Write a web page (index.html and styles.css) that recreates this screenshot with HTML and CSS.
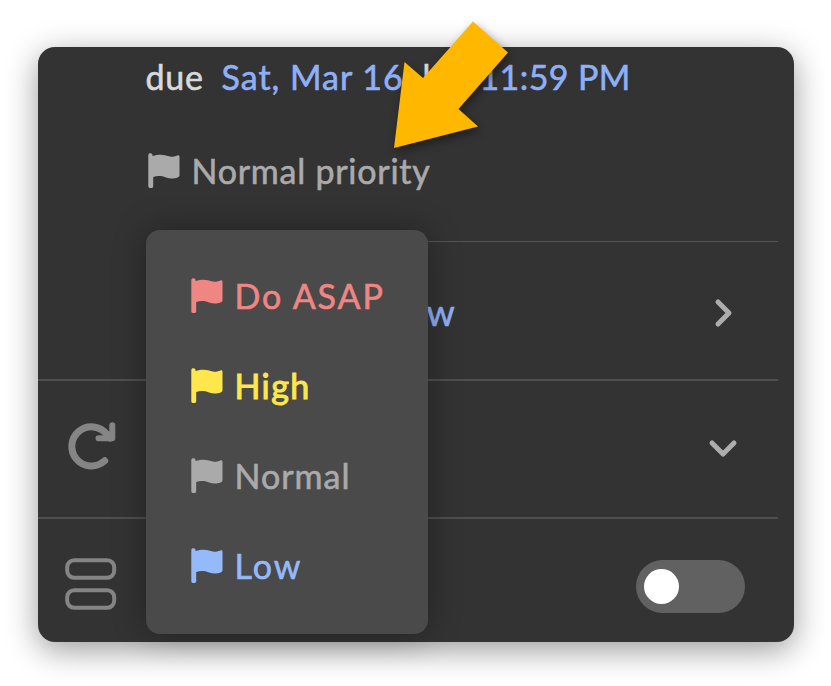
FILE: index.html
```html
<!DOCTYPE html>
<html lang="en">
<head>
  <meta charset="UTF-8">
  <meta name="viewport" content="width=device-width, initial-scale=1.0">
  <title>Task priority</title>
  <link rel="stylesheet" href="styles.css">
</head>
<body>
  <!-- Shared flag icon -->
  <svg class="sprite" width="0" height="0">
    <symbol id="flag" viewBox="0 0 32 36">
      <path d="M0.3 2.2C0.3 0.9 1.2 0.3 2.4 0.3C3.6 0.3 4.5 0.9 4.6 2.9C10 1.4 14 1.2 18 2.6C22 4 25 4 29.5 2.4C30.8 2 31.5 2.6 31.5 3.8V21.7C31.5 23.2 31 23.9 29.7 24.4C25 26 22 25.8 18 24.4C13 22.7 9.5 22.7 5.2 24V32.9C5.2 34.4 4.3 35.1 2.8 35.1C1.2 35.1 0.3 34.4 0.3 32.9Z"/>
    </symbol>
  </svg>

  <div class="card">
    <div class="row row-due">
      <div class="row-body">
        <div class="due-line">
          <span class="due">due</span>
          <span class="date">Sat, Mar 16</span>
          <span class="by">by</span>
          <span class="time">11:59 PM</span>
        </div>
        <div class="priority">
          <svg class="flag"><use href="#flag"/></svg>
          <span class="priority-text">Normal priority</span>
        </div>

        <div class="menu">
          <div class="menu-item asap">
            <svg class="flag"><use href="#flag"/></svg>
            <span>Do ASAP</span>
          </div>
          <div class="menu-item high">
            <svg class="flag"><use href="#flag"/></svg>
            <span>High</span>
          </div>
          <div class="menu-item normal">
            <svg class="flag"><use href="#flag"/></svg>
            <span>Normal</span>
          </div>
          <div class="menu-item low">
            <svg class="flag"><use href="#flag"/></svg>
            <span>Low</span>
          </div>
        </div>
      </div>
    </div>

    <div class="row row-when">
      <span class="when">w</span>
      <svg class="chevron" viewBox="0 0 30 30">
        <path d="M10 4L21 15L10 26"/>
      </svg>
    </div>

    <div class="row row-repeat">
      <svg class="icon" viewBox="0 0 54 54">
        <path class="repeat-arc" d="M40.7 40.8A19.6 19.6 0 1 1 43 14.5L46 18"/>
        <path class="repeat-head" d="M48.3 5.3V18.3H34.5M41 12L47.5 17.5"/>
      </svg>
      <svg class="chevron" viewBox="0 0 30 30">
        <path d="M4 9L15 20L26 9"/>
      </svg>
    </div>

    <div class="row row-list">
      <svg class="icon" viewBox="0 0 54 54">
        <rect x="3.2" y="3.2" width="47" height="17.6" rx="7"/>
        <rect x="3.2" y="33.2" width="47" height="17.6" rx="7"/>
      </svg>
      <div class="toggle"><div class="knob"></div></div>
    </div>
  </div>

  <svg class="arrow" viewBox="0 0 115 128">
    <polygon points="0,127 10.5,41 29,57 79,0.5 114,31.5 64.5,88 84,105.5"/>
  </svg>
</body>
</html>
```

FILE: styles.css
```css
* {
  box-sizing: border-box;
}

body {
  margin: 0;
  padding: 46.5px 37.5px;
  height: 686px;
  overflow: hidden;
  background-color: #fff;
  font-family: Lato, "Liberation Sans", sans-serif;
  font-size: 34px;
  line-height: 44px;
  position: relative;
}

.sprite {
  display: block;
}

.card {
  width: 756px;
  height: 595.5px;
  background-color: #333;
  border-radius: 17px;
  padding-right: 16px;
  box-shadow: 0 8px 32px rgba(0, 0, 0, 0.4);
}

.row {
  display: flex;
  align-items: center;
  border-bottom: 2px solid #4f4f4f;
}

.row-due {
  height: 195px;
  align-items: flex-start;
  margin-left: 108px;
  border-bottom-width: 1px;
  border-bottom-color: #555;
}

.row-when {
  height: 139px;
}

.row-repeat {
  height: 138px;
}

.row-list {
  height: 123px;
  border-bottom: none;
  padding-top: 13px;
}

.row-body {
  position: relative;
  width: 100%;
}

.due-line {
  display: flex;
  height: 44px;
  margin-top: 8px;
  color: #8eb0f8;
  white-space: nowrap;
  -webkit-text-stroke: 0.6px currentColor;
}

.due-line .due,
.due-line .by {
  color: #d9d9d9;
}

.due {
  width: 76px;
  letter-spacing: 0.8px;
}

.date {
  width: 201px;
  letter-spacing: 1px;
}

.by {
  width: 57px;
}

.time {
  letter-spacing: 0.4px;
}

.priority {
  display: flex;
  align-items: center;
  margin-top: 50px;
  color: #aaa;
  gap: 12px;
  padding-left: 2px;
  letter-spacing: 0.75px;
  -webkit-text-stroke: 0.6px currentColor;
}

.flag {
  width: 32px;
  height: 36px;
  fill: currentColor;
  stroke: none;
  flex: none;
}

/* Dropdown over the rows below */
.menu {
  position: absolute;
  top: 183px;
  left: 0;
  width: 282px;
  height: 404px;
  padding: 21px 0 0 45px;
  background-color: #4a4a4a;
  border-radius: 14px;
  box-shadow: 0 0 34px rgba(0, 0, 0, 0.33);
  z-index: 1;
}

.menu-item {
  display: flex;
  align-items: center;
  gap: 12px;
  height: 90px;
  -webkit-text-stroke: 0.6px currentColor;
}

.asap {
  color: #ef8683;
  letter-spacing: 1.9px;
}

.high {
  color: #fde74c;
  letter-spacing: 1.4px;
}

.high span {
  -webkit-text-stroke-width: 1px;
}

.normal {
  color: #aaa;
  letter-spacing: 1px;
}

.low {
  color: #94baf9;
  letter-spacing: 2px;
}

.when {
  margin-left: 389px;
  padding-top: 4px;
  font-size: 36px;
  color: #8eb0f8;
  -webkit-text-stroke: 0.6px currentColor;
}

.chevron {
  width: 30px;
  height: 30px;
  margin-left: auto;
  margin-right: 40px;
  fill: none;
  stroke: #adadad;
  stroke-width: 5;
  stroke-linecap: round;
  stroke-linejoin: round;
}

.row-when .chevron {
  margin-top: 5px;
}

.icon {
  width: 54px;
  height: 54px;
  margin-left: 26px;
  fill: none;
  stroke: #858585;
  stroke-width: 4;
}

.row-repeat .icon {
  margin-bottom: 4px;
}

.row-list .icon {
  margin-bottom: 5px;
}

.repeat-arc {
  stroke-width: 7;
  stroke-linecap: round;
}

.repeat-head {
  stroke-width: 6;
  stroke-linecap: round;
  stroke-linejoin: round;
}

.toggle {
  width: 109px;
  height: 53px;
  margin-left: auto;
  margin-right: 33px;
  padding: 9px 8.5px;
  border-radius: 27px;
  background-color: #616161;
}

.knob {
  width: 35px;
  height: 35px;
  border-radius: 50%;
  background-color: #fff;
}

/* Callout arrow pointing at the priority */
.arrow {
  position: absolute;
  left: 394px;
  top: 21px;
  width: 115px;
  height: 128px;
  overflow: visible;
  fill: #ffb700;
  filter: drop-shadow(2px 4px 5px rgba(0, 0, 0, 0.4));
  z-index: 2;
}
```
